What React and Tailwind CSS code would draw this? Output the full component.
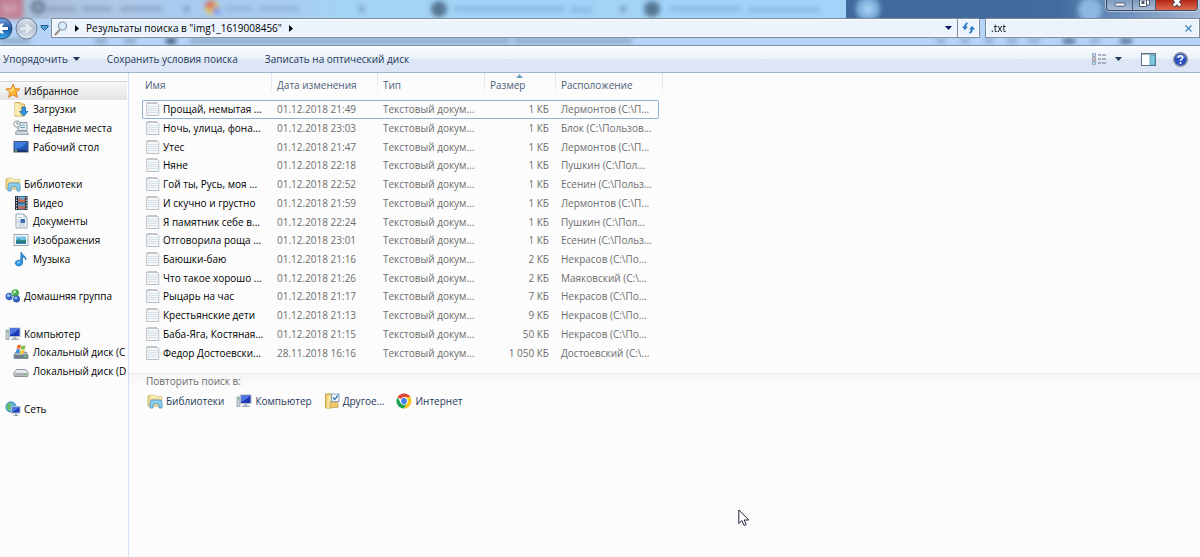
import React, { useState } from "react";

const svg = { width: 16, height: 16, viewBox: "0 0 16 16", "aria-hidden": true, className: "shrink-0" };

function Star() {
  return (
    <svg {...svg}>
      <path d="M8 1l2 4.600 5 .4-3.800 3.300 1.200 5L8 11.700l-4.400 2.600 1.200-5L1 6l5-.4z" fill="#ffb62e" stroke="#d9812b" />
      <path d="M8 3l1.200 3.200L6 9 3 7l3.500-.6z" fill="#ffe48a" />
    </svg>
  );
}
function Downloads() {
  return (
    <svg {...svg}>
      <path d="M2 1.500h5l1 1.500h3.500v12H2z" fill="#efd98a" stroke="#c9aa52" />
      <path d="M2 2l5 1.500V15l-5-1z" fill="#f8ebb4" />
      <path d="M9 6h3.500v4.500H15L10.800 15 6.500 10.500H9z" fill="#2f93de" stroke="#1766ad" strokeWidth=".7" />
    </svg>
  );
}
function Recent() {
  return (
    <svg {...svg}>
      <path d="M5 2.500h9v8H5z" fill="#e3ebf0" stroke="#8d9aa5" />
      <path d="M7 5h5M7 7.500h5" stroke="#6fa5c4" />
      <path d="M3 11h11l1.500 3.500h-13z" fill="#cfd6db" stroke="#8d979f" strokeWidth=".8" />
      <circle cx="4" cy="4" r="3.200" fill="#f4f7f9" stroke="#919ca6" />
      <path d="M4 2v2h1.500" stroke="#55626c" fill="none" strokeWidth=".8" />
    </svg>
  );
}
function Desktop() {
  return (
    <svg {...svg}>
      <rect x="1" y="2.500" width="14" height="10.500" fill="#2456b4" stroke="#4b5870" />
      <path d="M1.500 3h13L9 8 1.500 10z" fill="#3f7edc" />
      <path d="M1.500 11h13v1.800h-13z" fill="#16336f" />
      <path d="M2 11h2v1.500H2z" fill="#a9d268" />
    </svg>
  );
}
function Libraries() {
  return (
    <svg {...svg}>
      <path d="M1 3h5l1 1.300h7V13H1z" fill="#f4e09a" stroke="#d0b25e" />
      <path d="M3 2h5l1 1.500h6V6H3z" fill="#f9edba" stroke="#d6bd6d" strokeWidth=".6" />
      <path d="M3 15V9.500Q3 7 5.500 7h6.800Q15 7 15 9.500V15h-3v-3q0-1.300-1.200-1.300H7.300Q6 10.700 6 12v3z" fill="#8ccdf0" stroke="#4794c4" strokeWidth=".8" />
    </svg>
  );
}
function Video() {
  return (
    <svg {...svg}>
      <rect x="2" y="1" width="12.500" height="14" fill="#26323f" />
      <rect x="5" y="1.500" width="7" height="6" fill="#5eb3e2" />
      <rect x="5" y="8.500" width="7" height="6" fill="#4a9fd6" />
      <path d="M6 2l3 3 3-2v4H5zM6 9l2 3 4-2v4H5z" fill="#c46a4e" />
      <path d="M3.500 2v13M13.300 2v13" stroke="#e4eaf0" strokeDasharray="1.200 1.500" />
    </svg>
  );
}
function Doc() {
  return (
    <svg {...svg}>
      <path d="M3 1h8l3 3v11H3z" fill="#f7fafc" stroke="#98a7b4" />
      <path d="M11 1v3h3" fill="#dbe4ea" stroke="#98a7b4" strokeWidth=".7" />
      <path d="M5 4.500h4M5 11h7M5 13h7" stroke="#9bb0c1" strokeWidth=".8" />
      <rect x="7.500" y="6" width="4.500" height="4" fill="#386eb5" />
      <path d="M4.500 7h2M4.500 9h2" stroke="#7f9bb5" strokeWidth=".8" />
    </svg>
  );
}
function Picture() {
  return (
    <svg {...svg}>
      <rect x="1" y="2.500" width="14" height="11" fill="#f8fafb" stroke="#9aa8b3" />
      <rect x="3" y="4.500" width="10" height="7" fill="#72c2ec" />
      <path d="M3 8.500l3-1.500 3 1.500 4-1v4H3z" fill="#2b8a75" />
      <path d="M3 10h10v1.500H3z" fill="#1f67a3" />
    </svg>
  );
}
function Music() {
  return (
    <svg {...svg}>
      <path d="M8 1c.8 3 5.200 3.500 5 8-.8-2-2.200-2.800-3.500-3V12a3.600 2.900 0 1 1-1.700-2.400z" fill="#2c95de" stroke="#1b68ad" strokeWidth=".7" />
      <ellipse cx="5.500" cy="11.500" rx="1.500" ry="1" fill="#90d3fa" />
    </svg>
  );
}
function HomeGroup() {
  return (
    <svg {...svg}>
      <circle cx="4.300" cy="8.500" r="3.700" fill="#3565c3" />
      <circle cx="10.300" cy="5" r="3.700" fill="#48aa4f" />
      <circle cx="11.500" cy="11" r="3.500" fill="#3163be" />
      <circle cx="3.500" cy="7.500" r="1.500" fill="#a6cdf5" />
      <circle cx="9.700" cy="3.800" r="1.500" fill="#b9edac" />
      <circle cx="11" cy="10" r="1.300" fill="#9cc5f3" />
      <path d="M6 7.500l3 3M6.500 6.500l2-1" stroke="#dcebf6" />
    </svg>
  );
}
function Computer() {
  return (
    <svg {...svg}>
      <rect x="1" y="4" width="3" height="9.500" fill="#c9d1d8" stroke="#8b97a2" strokeWidth=".7" />
      <path d="M1.800 6h1.500" stroke="#58b34e" />
      <rect x="4.500" y="2" width="10.500" height="8.500" fill="#1c38b5" stroke="#b5bfc9" />
      <path d="M5 2.500h9.500L9 7 5 9z" fill="#4e76e2" />
      <path d="M8.500 11h2.500l.5 1.500H14V14H6v-1.500h2z" fill="#aab5bf" />
    </svg>
  );
}
function DiskC() {
  return (
    <svg {...svg}>
      <path d="M1 11l2-3h10l2 3v3.500H1z" fill="#a9b2b9" stroke="#727c84" strokeWidth=".8" />
      <path d="M1.500 11h13v3h-13z" fill="#6d7f8b" />
      <path d="M11 12.500h2.500" stroke="#6ee063" />
      <path d="M4.500 1.300q1.700-1 3.600 0L7.200 5q-1.700-1-3.600 0z" fill="#ee6a35" />
      <path d="M8.600 1.600q1.900.9 4 0l-.9 3.600q-1.900.8-4 0z" fill="#7cbd42" />
      <path d="M3.500 5.600q1.700-1 3.500 0L6.100 9.300q-1.700-1-3.500 0z" fill="#3a8fdf" />
      <path d="M7.500 5.900q1.900.9 4 0l-.9 3.500q-1.900.8-4 0z" fill="#f9c834" />
    </svg>
  );
}
function DiskD() {
  return (
    <svg {...svg}>
      <path d="M1 9.500L3.500 6.500h9L15 9.500v3q0 1-1 1H2q-1 0-1-1z" fill="#e7eaed" stroke="#8c949b" />
      <path d="M1.500 10h13v2.800h-13z" fill="#a9b0b6" />
      <path d="M11 11.500h2.500" stroke="#5bd052" />
    </svg>
  );
}
function Network() {
  return (
    <svg {...svg}>
      <circle cx="6" cy="6" r="5.200" fill="#54b3e4" stroke="#2b7eb5" strokeWidth=".7" />
      <path d="M3 2.500q3-1 4 1L5 6l1 3-2 1-2.500-4z" fill="#6cc064" />
      <rect x="6.500" y="5.500" width="8.500" height="6.500" fill="#1c3cbb" stroke="#b4bec8" />
      <path d="M7 6h7.500L10 9.500 7 11z" fill="#4c78e4" />
      <path d="M10 12.500h2v1.500h1.500v1h-5v-1H10z" fill="#9aa6b1" />
    </svg>
  );
}
function TextFile() {
  return (
    <svg {...svg} width="14" height="16" viewBox="1 0 14 16">
      <path d="M1.700 2H12l1.800 2v10.500H1.700z" fill="#f6f7f8" stroke="#b4babe" strokeWidth=".9" />
      <path d="M3 5.500h9.500M3 7.500h9.500M3 9.500h9.500M3 11.500h9.500" stroke="#cfdfe9" strokeWidth=".9" />
      <path d="M3 1v2M5 1v2M7 1v2M9 1v2M11 1v2" stroke="#a1a8ac" strokeWidth=".8" />
    </svg>
  );
}
function Other() {
  return (
    <svg {...svg}>
      <path d="M1.500 1h6v14h-6z" fill="#efd077" stroke="#c5a24b" />
      <path d="M4 2.500l4 1.500v11H3z" fill="#f8e5a3" />
      <path d="M6 9h8v5.500H6z" fill="#ebca6c" stroke="#c5a24b" strokeWidth=".7" />
      <rect x="7.500" y="1" width="7.500" height="7.500" fill="#f3f8fb" stroke="#89a2b8" />
      <path d="M9 4.500l1.700 2L14 2.500" fill="none" stroke="#2b76b7" strokeWidth="1.200" />
    </svg>
  );
}
function Chrome() {
  return (
    <svg {...svg}>
      <path d="M8 8L1.500 4.250A7.500 7.500 0 0 1 14.500 4.250L8 4.250z" fill="#e04435" />
      <path d="M1.500 4.250A7.500 7.500 0 0 0 8 15.500L11.250 9.900 8 8 4.750 9.900z" fill="#21a056" />
      <path d="M14.500 4.250A7.500 7.500 0 0 1 8 15.500l3.250-5.600L8 4.250z" fill="#fbc920" />
      <circle cx="8" cy="8" r="3.750" fill="#fff" />
      <circle cx="8" cy="8" r="2.900" fill="#4080ed" />
    </svg>
  );
}
function Caret({ color = "#1e395b" }) {
  return (
    <svg width="7" height="4" viewBox="0 0 7 4" aria-hidden="true" className="shrink-0">
      <path d="M0 0h7L3.500 4z" fill={color} />
    </svg>
  );
}
function Chevron() {
  return (
    <svg width="4" height="7" viewBox="0 0 4 7" aria-hidden="true" className="shrink-0">
      <path d="M0 0v7l4-3.500z" fill="#000" />
    </svg>
  );
}

/* Blurred browser tabs seen through the glass title bar */
function GlassBackdrop() {
  return (
    <svg className="absolute inset-0 h-full w-full" viewBox="0 0 1200 45" preserveAspectRatio="none" aria-hidden="true">
      <defs>
        <filter id="soft" x="-20%" y="-50%" width="140%" height="200%"><feGaussianBlur stdDeviation="2.500" /></filter>
        <linearGradient id="tabs">
          <stop offset="0" stopColor="#a9bcd6" />
          <stop offset=".14" stopColor="#b0c9e8" />
          <stop offset=".2" stopColor="#a9cbf0" />
          <stop offset=".33" stopColor="#a9cdf2" />
          <stop offset=".4" stopColor="#a3d3f6" />
          <stop offset="1" stopColor="#a3d3f8" />
        </linearGradient>
        <linearGradient id="frame">
          <stop offset="0" stopColor="#406a9c" />
          <stop offset=".6" stopColor="#426c9e" />
          <stop offset=".8" stopColor="#7092bf" />
          <stop offset="1" stopColor="#a4b8d6" />
        </linearGradient>
      </defs>
      <rect width="1200" height="45" fill="#b5d4f8" />
      <rect width="850" height="19" fill="url(#tabs)" />
      <rect x="846" width="354" height="19" fill="url(#frame)" />
      <g filter="url(#soft)">
        <rect x="-6" y="-6" width="29" height="25" fill="#bf7e91" />
        <path d="M3 6h4v8M14 4v8" stroke="#dcb4c2" strokeWidth="3" fill="none" />
        <circle cx="38" cy="7" r="5" fill="none" stroke="#62758c" strokeWidth="4" />
        <path d="M46 9h30M82 9h30M120 9h42" stroke="#7b93b3" strokeWidth="5" opacity=".6" />
        <path d="M184 9h5M359 9h5M620 9h6" stroke="#6583a8" strokeWidth="6" opacity=".7" />
        <circle cx="212" cy="8" r="7" fill="#e6c45e" />
        <path d="M205 8a7 7 0 0 1 9-7v7z" fill="#dc5f50" />
        <path d="M213 8h7v6h-7z" fill="#6f90e4" />
        <path d="M225 9h27M258 9h42" stroke="#86a5cb" strokeWidth="5" opacity=".6" />
        <circle cx="439" cy="9" r="8" fill="#557793" />
        <path d="M454 9h110M570 10h22M670 9h72M748 10h72" stroke="#80b2da" strokeWidth="5" opacity=".75" />
        <circle cx="652" cy="9" r="8" fill="#557793" />
        <circle cx="868" cy="9" r="12" fill="#84b5df" />
        <circle cx="868" cy="9" r="4" fill="#a9d4f4" />
        <circle cx="1090" cy="10" r="12" fill="#8cb8e0" />
        <path d="M0 41h30M95 41h12M124 41h12M190 41h320M514 41h118" stroke="#7b96b4" strokeWidth="5" opacity=".75" />
        <path d="M166 41h10" stroke="#2e4763" strokeWidth="5" />
        <path d="M936 41h10M960 41h10M984 41h10M1006 41h12M1028 41h12M1090 41h10" stroke="#7d99bd" strokeWidth="4" opacity=".8" />
        <path d="M1063 41h12M1120 41h12" stroke="#4e6a90" strokeWidth="5" />
      </g>
    </svg>
  );
}

function CaptionButtons() {
  return (
    <div className="absolute top-0 right-[2px] flex h-[11px] overflow-hidden rounded-b border border-t-0 border-[#3c4b62] shadow-[0_0_1px_1px_rgba(255,255,255,0.5)]">
      <button type="button" aria-label="Свернуть" className="flex w-[26px] justify-center border-r border-[#4b5c76] bg-linear-to-b from-[#7e9abf] to-[#a9bdd8]">
        <svg width="12" height="7" viewBox="0 0 12 7" aria-hidden="true"><rect x="1" y="3" width="10" height="3" rx=".5" fill="#fff" stroke="#4c5a70" /></svg>
      </button>
      <button type="button" aria-label="Свернуть в окно" className="flex w-[23px] justify-center border-r border-[#4b5c76] bg-linear-to-b from-[#7e9abf] to-[#a9bdd8]">
        <svg width="12" height="8" viewBox="0 0 12 8" aria-hidden="true">
          <path d="M4 0h7.500v5H9" fill="#fff" stroke="#4c5a70" />
          <path d="M1.500 0h7v6.500h-7z" fill="#fff" stroke="#4c5a70" />
          <rect x="4" y="1.500" width="2" height="2" fill="#4c5a70" stroke="#4c5a70" />
        </svg>
      </button>
      <button type="button" aria-label="Закрыть" className="flex w-[41px] justify-center bg-linear-to-b from-[#b3230f] to-[#dc6a50]">
        <svg width="12" height="8" viewBox="0 0 12 8" aria-hidden="true">
          <path d="M2.500 -2L9.500 6M9.500 -2L2.500 6" stroke="#4a3a44" strokeWidth="4.500" />
          <path d="M2.800 -1.700L9.200 5.700M9.200 -1.700L2.800 5.700" stroke="#fff" strokeWidth="2.800" />
        </svg>
      </button>
    </div>
  );
}

const nav = [
  ["Избранное", Star, 0],
  ["Загрузки", Downloads, 1],
  ["Недавние места", Recent, 1],
  ["Рабочий стол", Desktop, 1],
  null,
  ["Библиотеки", Libraries, 0],
  ["Видео", Video, 1],
  ["Документы", Doc, 1],
  ["Изображения", Picture, 1],
  ["Музыка", Music, 1],
  null,
  ["Домашняя группа", HomeGroup, 0],
  null,
  ["Компьютер", Computer, 0],
  ["Локальный диск (C", DiskC, 1],
  ["Локальный диск (D", DiskD, 1],
  null,
  ["Сеть", Network, 0],
];

const files = [
  ["Прощай, немытая ...", "01.12.2018 21:49", "1 КБ", "Лермонтов (C:\\П..."],
  ["Ночь, улица, фона...", "01.12.2018 23:03", "1 КБ", "Блок (C:\\Пользов..."],
  ["Утес", "01.12.2018 21:47", "1 КБ", "Лермонтов (C:\\П..."],
  ["Няне", "01.12.2018 22:18", "1 КБ", "Пушкин (C:\\Пол..."],
  ["Гой ты, Русь, моя ...", "01.12.2018 22:52", "1 КБ", "Есенин (C:\\Польз..."],
  ["И скучно и грустно", "01.12.2018 21:59", "1 КБ", "Лермонтов (C:\\П..."],
  ["Я памятник себе в...", "01.12.2018 22:24", "1 КБ", "Пушкин (C:\\Пол..."],
  ["Отговорила роща ...", "01.12.2018 23:01", "1 КБ", "Есенин (C:\\Польз..."],
  ["Баюшки-баю", "01.12.2018 21:16", "2 КБ", "Некрасов (C:\\По..."],
  ["Что такое хорошо ...", "01.12.2018 21:26", "2 КБ", "Маяковский (C:\\..."],
  ["Рыцарь на час", "01.12.2018 21:17", "7 КБ", "Некрасов (C:\\По..."],
  ["Крестьянские дети", "01.12.2018 21:13", "9 КБ", "Некрасов (C:\\По..."],
  ["Баба-Яга, Костяная...", "01.12.2018 21:15", "50 КБ", "Некрасов (C:\\По..."],
  ["Федор Достоевски...", "28.11.2018 16:16", "1 050 КБ", "Достоевский (C:\\..."],
];

const columns = ["Имя", "Дата изменения", "Тип", "Размер", "Расположение"];
const places = [["Библиотеки", Libraries], ["Компьютер", Computer], ["Другое...", Other], ["Интернет", Chrome]];

export default function App() {
  const [query, setQuery] = useState(".txt");
  return (
    <div className="flex min-h-screen flex-col bg-[#fcfcfc] font-['Open_Sans','Noto_Sans',sans-serif] text-[10px] leading-[14px] text-black">
      <header className="relative overflow-hidden border-b border-[#7d8da3] pt-[18px] pb-[7px]">
        <GlassBackdrop />
        <CaptionButtons />
        <div className="relative flex items-center">
          <div className="flex h-[19px] w-[51px] shrink-0 items-center">
            <button type="button" aria-label="Назад" className="-my-1 -ml-[10px] shrink-0">
              <svg width="23" height="23" viewBox="0 0 23 23" aria-hidden="true">
                <defs><linearGradient id="back" x2="0" y2="1"><stop offset="0" stopColor="#7fa9de" /><stop offset=".5" stopColor="#1a4fa6" /><stop offset="1" stopColor="#35b5f0" /></linearGradient></defs>
                <circle cx="11.500" cy="11.500" r="10.500" fill="url(#back)" stroke="#2a3f66" />
                <path d="M18 10h-6l2-3.500h-3L5.500 11.500l5.500 5h3L12 13h6z" fill="#fff" />
              </svg>
            </button>
            <button type="button" aria-label="Вперед" className="-my-1 ml-[2px] shrink-0">
              <svg width="23" height="23" viewBox="0 0 23 23" aria-hidden="true">
                <defs><linearGradient id="fwd" x2="0" y2="1"><stop offset="0" stopColor="#dbe3ee" /><stop offset=".5" stopColor="#b4c0d1" /><stop offset="1" stopColor="#dfe9f5" /></linearGradient></defs>
                <circle cx="11.500" cy="11.500" r="10.500" fill="url(#fwd)" stroke="#6b7b92" />
                <path d="M5 10h6L9 6.500h3l5.500 5-5.500 5H9l2-3.500H5z" fill="#e6ebf2" stroke="#c2ccd9" strokeWidth=".5" />
              </svg>
            </button>
            <button type="button" aria-label="Последние страницы" className="ml-[2px] shrink-0">
              <svg width="9" height="6" viewBox="0 0 9 6" aria-hidden="true"><path d="M1 .5h7v1.500L4.500 5.500 1 2z" fill="#4fa0d8" stroke="#1d5288" strokeWidth=".9" /></svg>
            </button>
          </div>
          <nav aria-label="Адрес" className="flex h-[20px] min-w-0 flex-1 items-center border border-[#7f8b9b] bg-[#ebf3fd] shadow-[inset_0_0_0_1px_#fbfdff]">
            <svg width="14" height="15" viewBox="0 0 14 15" aria-hidden="true" className="ml-[2px] shrink-0">
              <path d="M5.500 9L1.500 13.500" stroke="#9d8f86" strokeWidth="2" strokeLinecap="round" />
              <circle cx="8.500" cy="5" r="4" fill="#d8ecfb" stroke="#8796a6" strokeWidth="1.200" />
            </svg>
            <span className="ml-[7px]"><Chevron /></span>
            <a href="#results" className="ml-[7px] whitespace-nowrap">Результаты поиска в "img1_1619008456"</a>
            <span className="ml-[7px]"><Chevron /></span>
            <button type="button" aria-label="Предыдущие расположения" className="mr-[5px] ml-auto"><Caret color="#0c1560" /></button>
            <button type="button" aria-label="Обновить" className="flex h-full w-[22px] items-center justify-center border-l border-[#7f8b9b]">
              <svg width="13" height="12" viewBox="0 0 13 12" aria-hidden="true" fill="none" stroke="#2775bd" strokeWidth="1.600">
                <path d="M5.500 1Q3 2 3 5" /><path d="M0 4.500h6L3 8z" fill="#2775bd" stroke="none" />
                <path d="M7.500 11Q10 10 10 7" /><path d="M7 7.500h6L10 4z" fill="#2775bd" stroke="none" />
              </svg>
            </button>
          </nav>
          <form role="search" className="ml-[5px] flex h-[20px] w-[215px] shrink-0 items-center border border-[#7f8b9b] bg-[#ebf3fd] shadow-[inset_0_0_0_1px_#fbfdff]" onSubmit={(e) => e.preventDefault()}>
            <input aria-label="Поиск" value={query} onChange={(e) => setQuery(e.target.value)} className="h-full min-w-0 flex-1 bg-transparent pl-[5px] outline-none" />
            <button type="button" aria-label="Очистить" onClick={() => setQuery("")} className="mr-[7px]">
              <svg width="7" height="7" viewBox="0 0 7 7" aria-hidden="true"><path d="M.5 .5l6 6M6.500 .5l-6 6" stroke="#4b87bd" strokeWidth="1.200" /></svg>
            </button>
          </form>
        </div>
      </header>

      <div role="toolbar" aria-label="Команды" className="flex h-[27px] items-center border-b border-[#a0b4cf] bg-linear-to-b from-[#fbfdff] from-0% via-[#eaf1fa] via-50% to-[#dce6f4] to-52% px-[3px] text-[#1e395b]">
        <button type="button" className="flex items-center gap-[5px]">Упорядочить <Caret /></button>
        <button type="button" className="ml-[27px]">Сохранить условия поиска</button>
        <button type="button" className="ml-[27px]">Записать на оптический диск</button>
        <button type="button" aria-label="Изменить представление" className="ml-auto flex items-center gap-[9px]">
          <svg width="14" height="12" viewBox="0 0 14 12" aria-hidden="true">
            <path d="M.5 .5h3v3h-3zM.5 4.500h3v3h-3zM.5 8.500h3v3h-3z" fill="#fff" stroke="#8a98a8" strokeWidth=".8" />
            <path d="M1.200 2h1.600" stroke="#4a90d0" /><path d="M1.200 6h1.600" stroke="#e0503c" /><path d="M1.200 10h1.600" stroke="#4a90d0" />
            <path d="M6 2h3M10 2h4M6 6h3M10 6h4M6 10h3M10 10h4" stroke="#66788f" strokeWidth="1.200" />
          </svg>
          <Caret />
        </button>
        <button type="button" aria-label="Область предпросмотра" className="ml-[19px]">
          <svg width="15" height="13" viewBox="0 0 15 13" aria-hidden="true">
            <rect x=".5" y=".5" width="14" height="12" fill="#fdfeff" stroke="#5f7486" />
            <path d="M1 1.500h13" stroke="#a9bac8" />
            <rect x="9" y="2" width="5" height="10" fill="#7ec8e2" stroke="#4a93b5" strokeWidth=".7" />
          </svg>
        </button>
        <button type="button" aria-label="Справка" className="mr-[9px] ml-[17px]">
          <svg width="15" height="15" viewBox="0 0 15 15" aria-hidden="true">
            <circle cx="7.500" cy="7.500" r="6.800" fill="#2a50c0" stroke="#8e959e" strokeWidth="1.400" />
            <path d="M3 6a4.800 4.800 0 0 1 9 0z" fill="#6d90e4" />
            <path d="M5.300 5.800Q5.300 3.700 7.500 3.700T9.700 5.600Q9.700 6.700 8.500 7.300 7.500 7.900 7.500 9" fill="none" stroke="#fff" strokeWidth="1.500" />
            <circle cx="7.500" cy="11" r="1" fill="#fff" />
          </svg>
        </button>
      </div>

      <div className="flex flex-1">
        <aside className="w-[129px] shrink-0 overflow-hidden border-r border-[#d4e3f3] pt-[8px] pr-px">
          <ul className="grid h-[337px] grid-rows-[repeat(18,minmax(0,1fr))]">
            {nav.map((item, i) => {
              if (!item) return <li key={i} aria-hidden="true" />;
              const [label, Icon, level] = item;
              const tone = i === 0 ? "border-t border-[#d5d5d5] bg-linear-to-b from-[#f8f8f8] to-[#e4e4e4]" : "";
              return (
                <li key={i} className="flex">
                  <a href="#folder" className={"flex flex-1 items-center whitespace-nowrap " + (level ? "gap-[4px] pl-[13px] " : "gap-[3px] pl-[5px] ") + tone}>
                    <Icon />{label}
                  </a>
                </li>
              );
            })}
          </ul>
        </aside>

        <main id="results" className="min-w-0 flex-1">
          <table className="ml-[13px] h-[289px] w-[521px] table-fixed border-separate border-spacing-0">
            <colgroup>
              <col className="w-[129px]" /><col className="w-[106px]" /><col className="w-[107px]" /><col className="w-[71px]" /><col className="w-[104px]" /><col className="w-[4px]" />
            </colgroup>
            <thead>
              <tr>
                {columns.map((c, i) => (
                  <th key={c} scope="col" aria-sort={i === 3 ? "ascending" : undefined} className={"relative h-[27px] p-0 pb-[4px] text-left font-normal text-[#4c607a] " + (i === 0 ? "pl-[3px]" : "pl-[6px]")}>
                    {i > 0 && <span className="absolute top-0 left-0 h-[20px] w-px bg-linear-to-b from-[#d5e3f2] to-[#eef3f9]" />}
                    {i === 3 && <svg className="absolute top-px left-[32px]" width="7" height="4" viewBox="0 0 7 4" aria-hidden="true"><path d="M0 4h7L3.500 0z" fill="#6d9fbd" /></svg>}
                    <button type="button">{c}</button>
                  </th>
                ))}
                <td className="relative p-0"><span className="absolute top-0 right-0 h-[20px] w-px bg-linear-to-b from-[#d5e3f2] to-[#eef3f9]" /></td>
              </tr>
            </thead>
            <tbody className="text-[#6d6d6d]">
              {files.map(([name, date, size, place], i) => {
                const edge = i === 0 ? "border-[#8fb1d9] border-y p-0 " : "border-transparent border-y p-0 ";
                return (
                  <tr key={name} className="whitespace-nowrap">
                    <td className={edge + "rounded-l-[2px] border-l pl-[3px] text-black"}>
                      <span className="flex h-[16px] items-center gap-[3px]"><TextFile />{name}</span>
                    </td>
                    <td className={edge + "pl-[6px]"}>{date}</td>
                    <td className={edge + "pl-[6px]"}>Текстовый докум...</td>
                    <td className={edge + "pr-[6px] text-right"}>{size}</td>
                    <td className={edge + "rounded-r-[2px] border-r pl-[6px]"}>{place}</td>
                  </tr>
                );
              })}
            </tbody>
          </table>

          <section aria-labelledby="again" className="mt-[11px] border-t border-[#e9e9e9] bg-linear-to-b from-[#f6f6f6] to-[#fcfcfc] to-[16px] pl-[17px]">
            <h2 id="again" className="font-normal text-[#6d6d6d]">Повторить поиск в:</h2>
            <div className="mt-[5px] flex gap-[12px] pl-[1px] text-[#1e395b]">
              {places.map(([label, Icon]) => (
                <a key={label} href="#search" className="flex items-center gap-[3px]"><Icon />{label}</a>
              ))}
            </div>
          </section>
        </main>
      </div>

      <svg className="pointer-events-none absolute top-[509px] left-[738px]" width="12" height="18" viewBox="0 0 12 18" aria-hidden="true">
        <path d="M.8 1v13.500l3-3 2.200 5 2.200-1L6.200 11h4.600z" fill="#fff" stroke="#23233a" />
      </svg>
    </div>
  );
}
